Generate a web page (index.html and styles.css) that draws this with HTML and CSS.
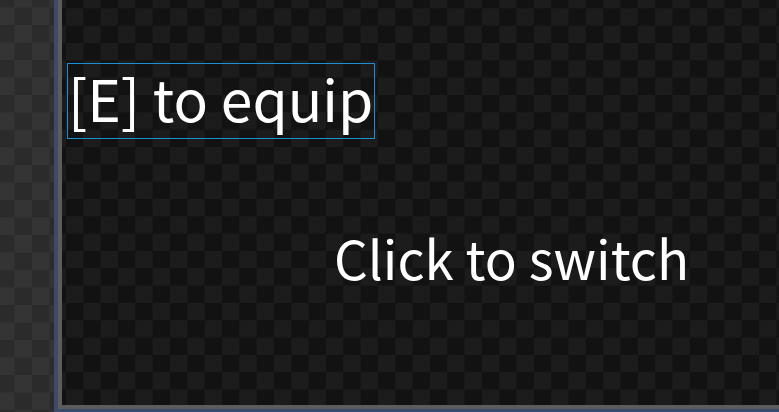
FILE: index.html
```html
<!DOCTYPE html>
<html lang="en">
<head>
  <meta charset="UTF-8" />
  <meta name="viewport" content="width=device-width, initial-scale=1.0">
  <title>Equip prompt</title>
  <link rel="stylesheet" href="styles.css">
</head>
<body>

<div class="sidebar"></div>

<div class="frame">
  <div class="stage">
    <!-- interaction prompt -->
    <div class="prompt">[E] to equip</div>

    <!-- switch hint -->
    <div class="hint">Click to switch</div>
  </div>
</div>

</body>
</html>
```

FILE: styles.css
```css
    body {
      margin: 0;
      padding: 0;
      height: 412px;
      display: flex;
      overflow: hidden;
      font-family: "Noto Sans CJK JP", "Noto Sans", sans-serif;
      color: #ffffff;
    }

    .sidebar {
      width: 54px;
      flex: none;
      background-color: #2b2b2b;
      background-image:
        linear-gradient(45deg, #343434 25%, transparent 25%, transparent 75%, #343434 75%),
        linear-gradient(45deg, #343434 25%, transparent 25%, transparent 75%, #343434 75%);
      background-size: 35px 35px;
      background-position: -3px -10px, 14.5px 7.5px;
    }

    .frame {
      flex: 1;
      display: flex;
      border-left: 4px solid #3b4b6c;
      border-bottom: 3px solid #3b4b6c;
    }

    .stage {
      flex: 1;
      border-left: 4px solid #5c5c5c;
      border-bottom: 4px solid #5c5c5c;
      background-color: #121212;
      background-image:
        linear-gradient(45deg, #1c1c1c 25%, transparent 25%, transparent 75%, #1c1c1c 75%),
        linear-gradient(45deg, #1c1c1c 25%, transparent 25%, transparent 75%, #1c1c1c 75%);
      background-size: 34.67px 34.67px;
      background-position: 4px -9px, 21.33px 8.33px;
      padding-top: 63px;
    }

    .prompt {
      box-sizing: border-box;
      margin-left: 5px;
      width: 308px;
      height: 76px;
      border: 1px solid #1b8fd6;
      font-size: 57px;
      line-height: 66px;
      white-space: nowrap;
    }

    .hint {
      margin: 88px 0 0 272px;
      font-size: 53px;
      line-height: 60px;
      white-space: nowrap;
    }
```
